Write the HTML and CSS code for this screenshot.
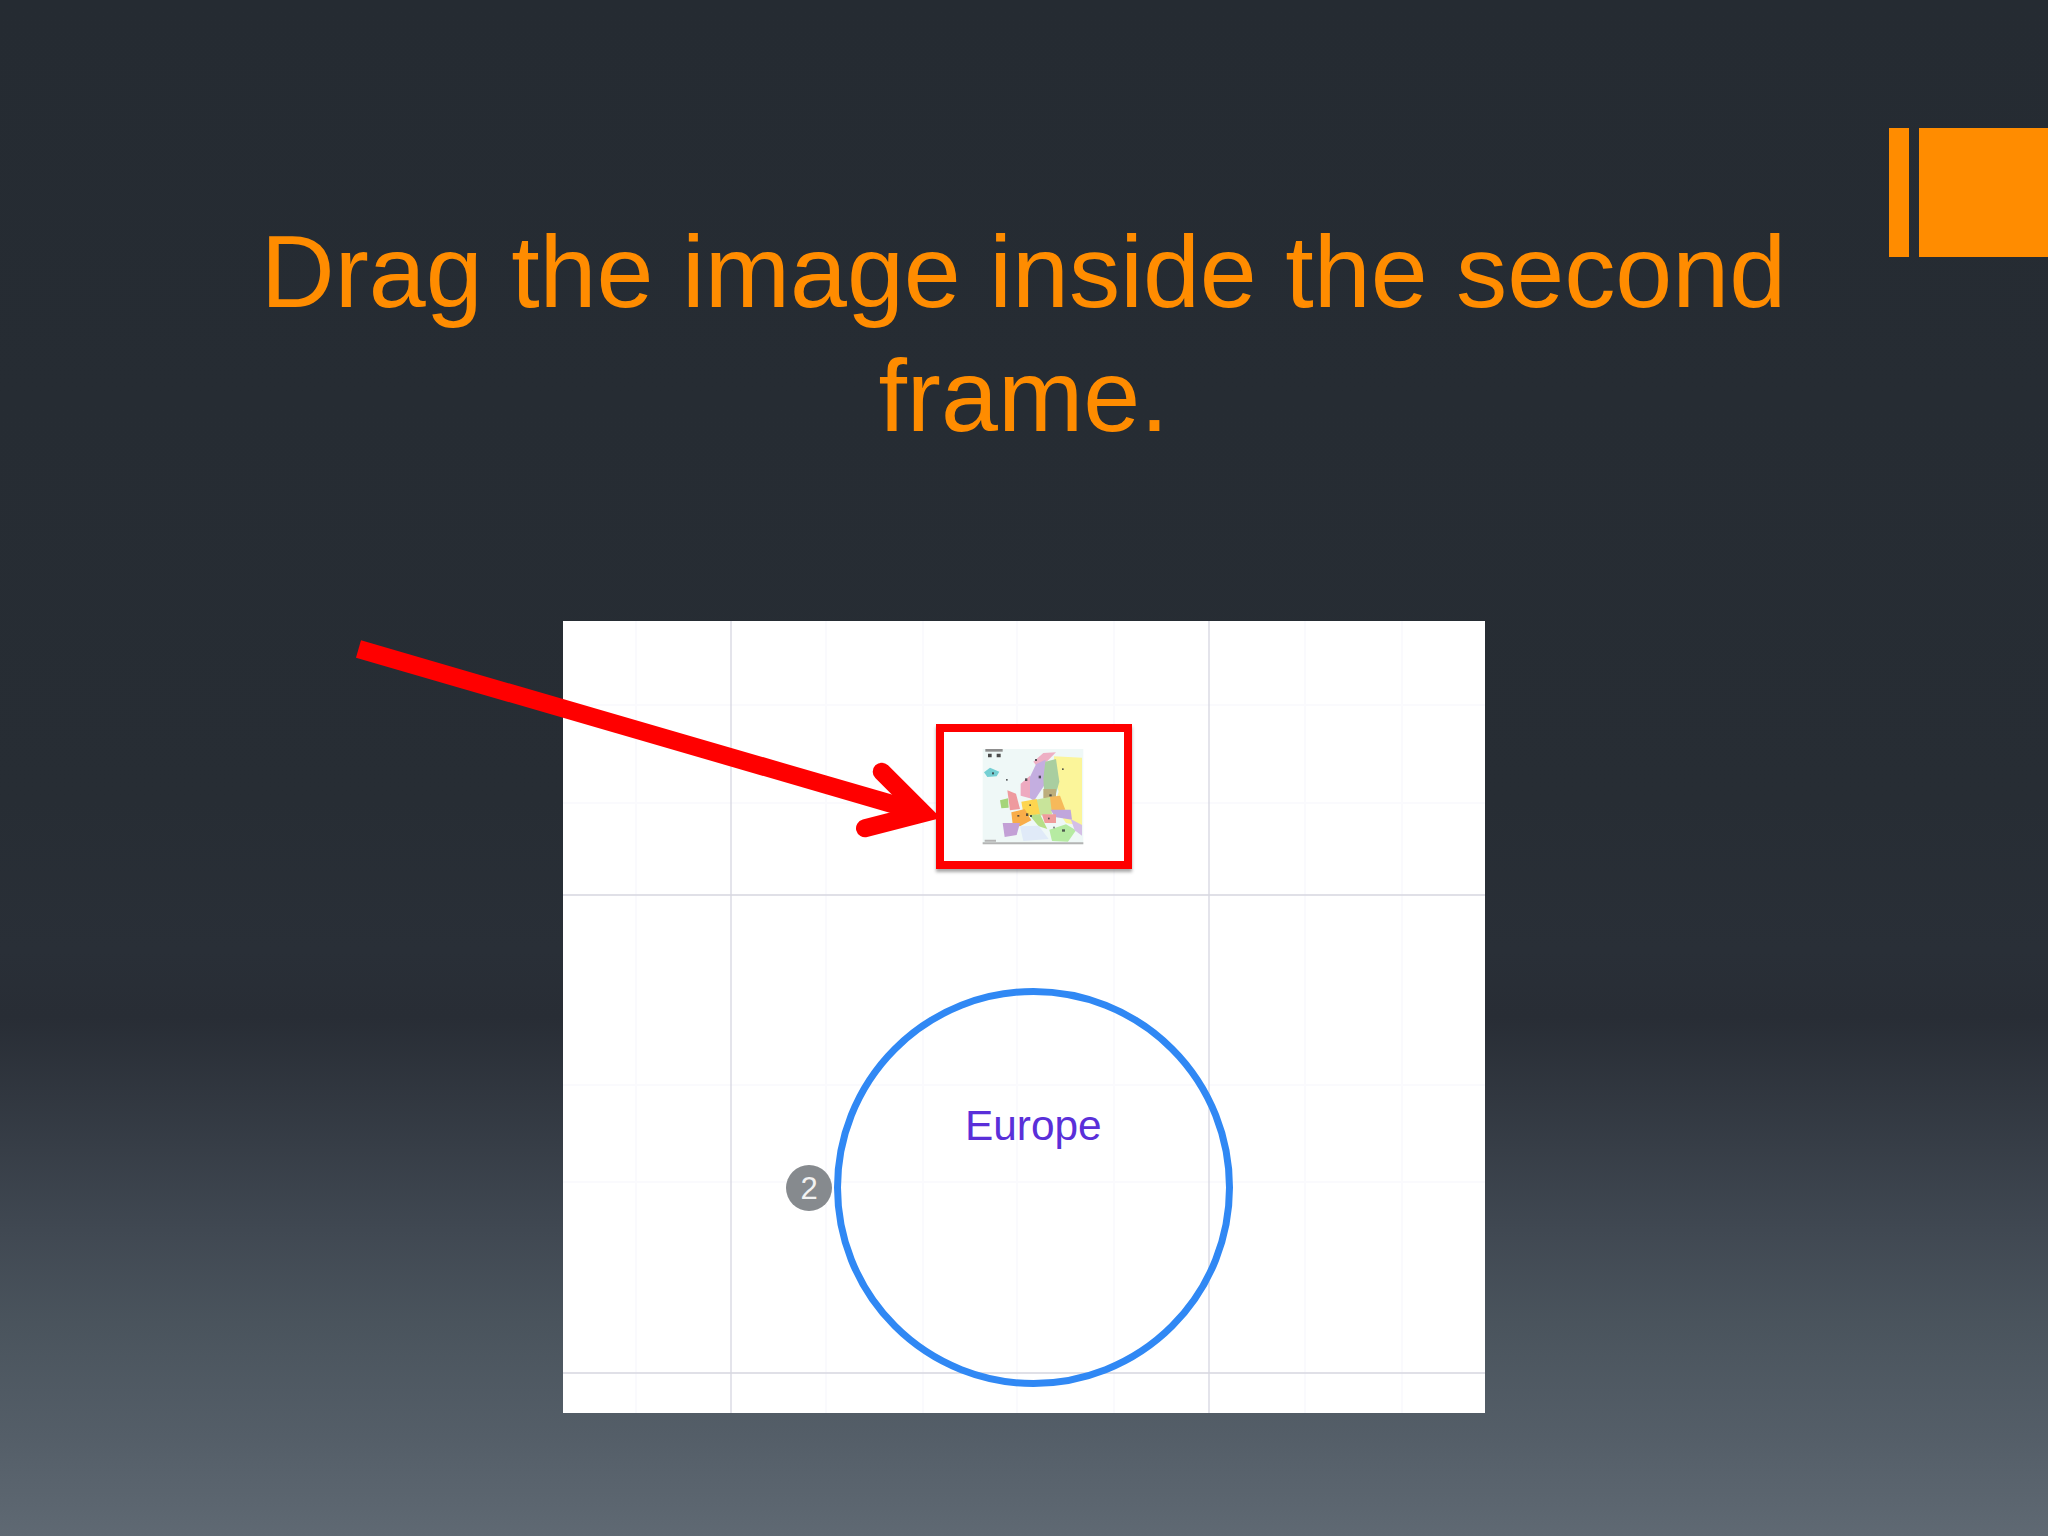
FILE: index.html
```html
<!DOCTYPE html>
<html lang="en">
<head>
<meta charset="utf-8">
<title>Drag the image inside the second frame.</title>
<link rel="stylesheet" href="styles.css">
</head>
<body>
<main class="slide">
  <div class="top">
    <div class="accent"><span class="accent-thin"></span><span class="accent-wide"></span></div>
    <h1 class="title">Drag the image inside the second frame.</h1>
  </div>
  <section class="panel">
    <svg class="grid" viewBox="0 0 922 792" aria-hidden="true">
      <g class="faint">
        <path d="M73 0V792M263 0V792M360 0V792M454 0V792M551 0V792M742 0V792M839 0V792"/>
        <path d="M0 84H922M0 182H922M0 464H922M0 561H922"/>
      </g>
      <g class="major">
        <path d="M168 0V792M646 0V792"/>
        <path d="M0 274H922M0 752H922"/>
      </g>
      <circle class="ring" cx="470.500" cy="566.500" r="196"/>
    </svg>
    <div class="frame">
      <svg class="map" viewBox="0 0 324 312" aria-hidden="true">
        <defs><filter id="soft" x="-5%" y="-5%" width="110%" height="110%"><feGaussianBlur stdDeviation="1.800"/></filter></defs>
        <g filter="url(#soft)">
          <rect x="8" y="12" width="302" height="286" fill="#eff8f7"/>
          <path d="M16 12H68V20H16Z" fill="#8d8d8d"/>
          <path d="M24 26H35V37H24ZM50 26H62V37H50Z" fill="#4b4b4b"/>
          <path d="M12 82L30 68L58 80L50 94L22 96Z" fill="#74cfd3"/>
          <path d="M222 34L306 38L306 242L258 234L222 180L236 140L222 92Z" fill="#fbf59a"/>
          <path d="M228 22L190 24L160 50L172 66L200 50Z" fill="#eeb0c4"/>
          <path d="M196 44L168 58L148 100L140 152L162 168L192 122L200 70Z" fill="#c4aee0"/>
          <path d="M150 92L122 116L122 152L150 160Z" fill="#eeaac0"/>
          <path d="M196 50L228 42L238 110L228 146L192 136L190 100Z" fill="#a9cea0"/>
          <path d="M190 132H228V160H190Z" fill="#bcae7c"/>
          <path d="M206 156L240 152L256 194L212 198Z" fill="#f6b95a"/>
          <path d="M166 164L210 156L216 208L176 212Z" fill="#c8e49a"/>
          <path d="M124 170L170 162L180 208L132 216Z" fill="#fdd54f"/>
          <path d="M94 202L134 192L154 226L120 244L98 238Z" fill="#f9ad48"/>
          <path d="M82 136L108 146L120 192L90 196Z" fill="#ee9a9e"/>
          <path d="M60 166L84 160L86 188L64 190Z" fill="#a5d57a"/>
          <path d="M68 234L120 234L110 270L74 276Z" fill="#c3a0d6"/>
          <path d="M212 194L272 194L276 224L224 216Z" fill="#c0a6dc"/>
          <path d="M186 208H228V234H194Z" fill="#ef9c9c"/>
          <path d="M148 210L180 208L202 252L176 244Z" fill="#b6df88"/>
          <path d="M120 244L176 242L206 282L130 288Z" fill="#e0eaf8"/>
          <path d="M208 254L258 238L288 256L264 290L216 288Z" fill="#b6eba2"/>
          <path d="M272 222L306 240V272L284 256Z" fill="#d4bfe6"/>
          <path d="M14 284H48V290H14ZM8 292H310V298H8Z" fill="#b4b4b4"/>
        </g>
        <g class="cities">
          <rect x="135" y="100" width="7" height="8"/><rect x="176" y="92" width="7" height="8"/><rect x="246" y="253" width="9" height="7"/>
          <rect x="138" y="205" width="7" height="8"/><rect x="78" y="102" width="5" height="5"/><rect x="165" y="42" width="6" height="6"/>
          <rect x="246" y="70" width="5" height="5"/><rect x="220" y="245" width="4" height="5"/><rect x="112" y="210" width="6" height="5"/>
          <rect x="150" y="210" width="6" height="6"/><rect x="208" y="148" width="7" height="6"/><rect x="36" y="82" width="6" height="6"/>
          <rect x="204" y="218" width="5" height="5"/><rect x="148" y="178" width="5" height="5"/>
        </g>
      </svg>
    </div>
    <span class="label">Europe</span>
    <span class="badge">2</span>
  </section>
  <svg class="arrow" viewBox="0 0 2048 1536" aria-hidden="true">
    <path class="arrow-shaft" d="M358.500 649L923 813"/>
    <path class="arrow-head" d="M881.700 771.700L923.300 813.300L865 828.300"/>
  </svg>
</main>
</body>
</html>
```
FILE: styles.css
```css
* { box-sizing: border-box; }
html, body { margin: 0; padding: 0; }
body { width: 2048px; height: 1536px; overflow: hidden; }
.slide {
  position: relative;
  width: 2048px;
  height: 1536px;
  display: flex;
  flex-direction: column;
  background: linear-gradient(180deg, #252b32 0, #272d34 800px, #292f37 950px, #282d35 1017px, #404852 1230px, #4a545d 1324px, #545e68 1436px, #5f6973 1536px);
  font-family: "Liberation Sans", Arial, sans-serif;
}
.top { display: grid; height: 621px; }
.accent {
  grid-area: 1 / 1;
  justify-self: end;
  display: flex;
  gap: 10px;
  margin-top: 128px;
  height: 129px;
}
.accent-thin { width: 20px; background: #ff8c00; }
.accent-wide { width: 129px; background: #ff8c00; }
.title {
  grid-area: 1 / 1;
  justify-self: center;
  width: 1600px;
  margin: 210px 0 0 -1px;
  font-size: 102.400px;
  font-weight: 400;
  line-height: 124px;
  text-align: center;
  color: #ff8c00;
}
.panel {
  position: relative;
  width: 922px;
  height: 792px;
  margin-left: 563px;
  background: #fff;
}
.grid { display: block; width: 922px; height: 792px; }
.faint path { stroke: #fafafd; stroke-width: 2; fill: none; }
.major path { stroke: #d6d6e0; stroke-width: 1.300; fill: none; }
.ring { fill: none; stroke: #3088f4; stroke-width: 7; }
.frame {
  position: absolute;
  left: 373px;
  top: 103px;
  width: 196px;
  height: 145px;
  display: flex;
  align-items: center;
  justify-content: center;
  border: 8px solid #fe0000;
  background: #fff;
  box-shadow: 0 3px 3px rgba(60, 60, 60, 0.45);
}
.map { display: block; width: 108px; height: 104px; flex: none; }
.cities rect { fill: #33363a; opacity: 0.8; }
.label {
  position: absolute;
  left: 402px;
  top: 481px;
  font-size: 42.400px;
  line-height: 48px;
  color: #5a2fd9;
}
.badge {
  position: absolute;
  left: 223px;
  top: 544px;
  width: 46px;
  height: 46px;
  border-radius: 50%;
  background: #868a8e;
  color: #f2f2f2;
  font-size: 31px;
  line-height: 48px;
  text-align: center;
}
.arrow { position: absolute; left: 0; top: 0; width: 2048px; height: 1536px; pointer-events: none; }
.arrow-shaft { fill: none; stroke: #ff0000; stroke-width: 18; }
.arrow-head { fill: none; stroke: #ff0000; stroke-width: 18; stroke-linecap: round; stroke-linejoin: miter; }
```
